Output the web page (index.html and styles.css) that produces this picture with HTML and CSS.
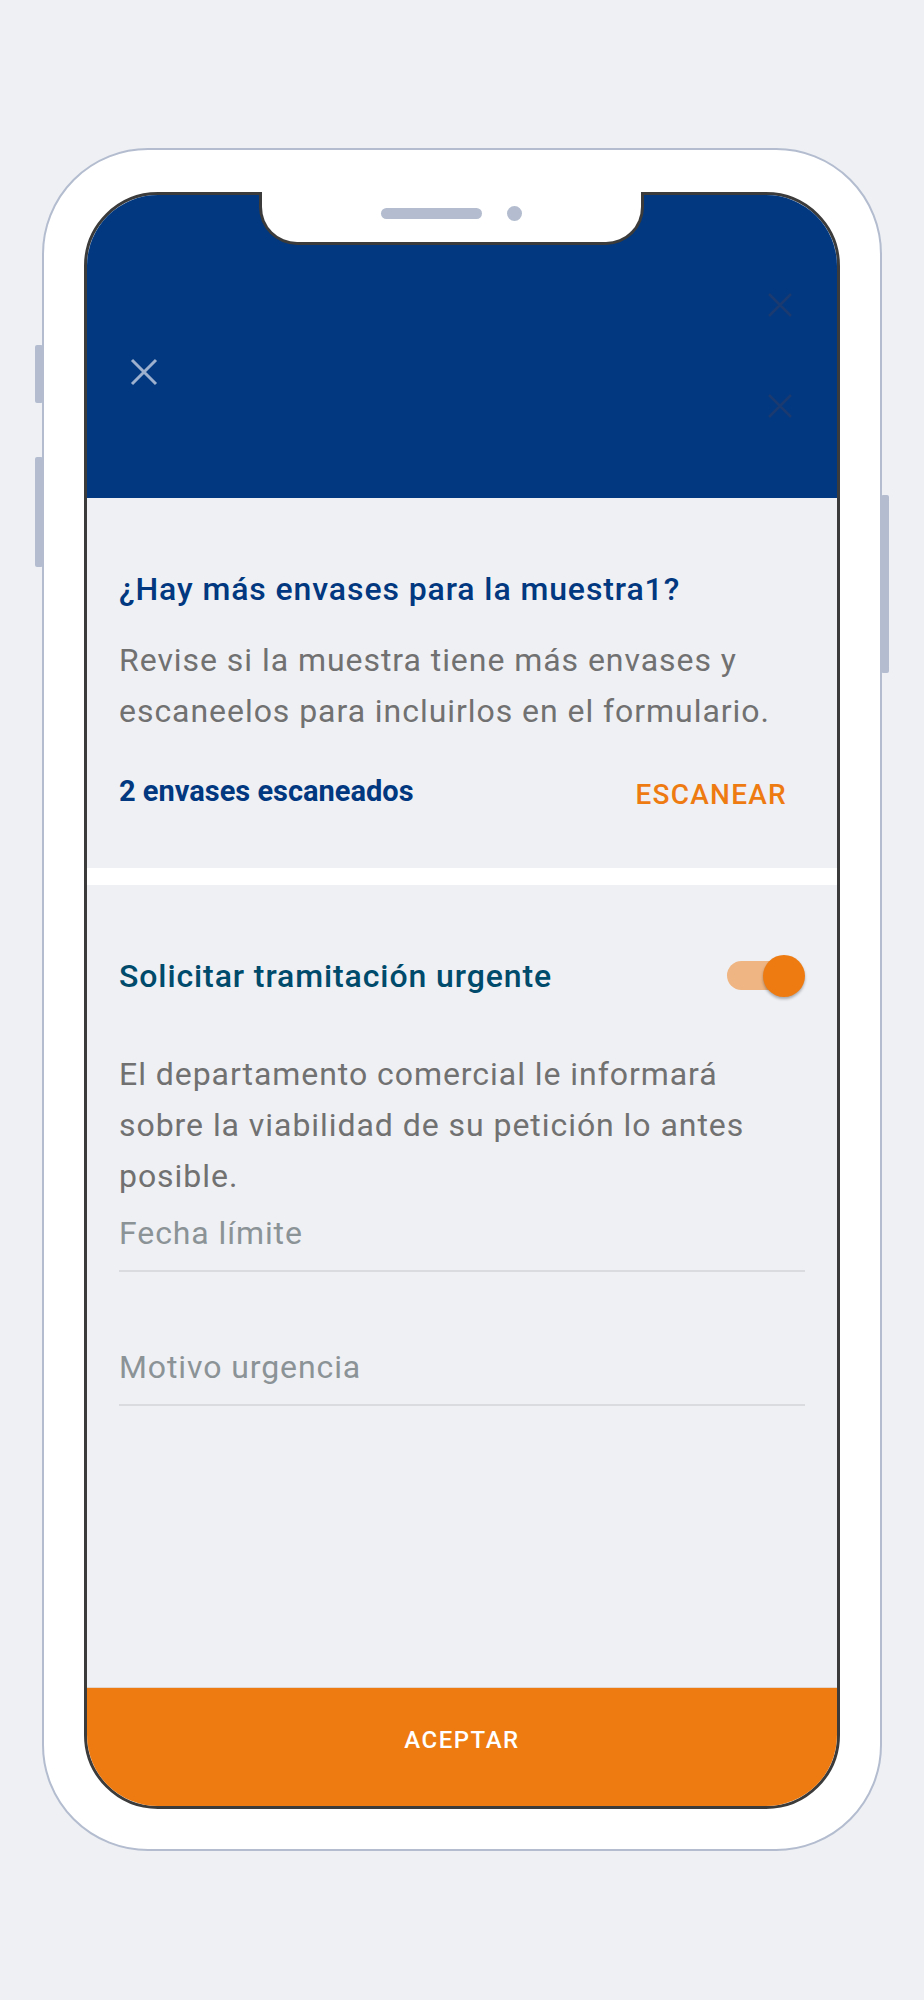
FILE: index.html
```html
<!DOCTYPE html>
<html lang="es">
<head>
    <meta charset="UTF-8">
    <meta name="viewport" content="width=device-width, initial-scale=1.0">
    <title>Muestra - envases</title>
    <link rel="stylesheet" href="styles.css">
</head>
<body>
    <div class="phone">
        <span class="side-btn side-btn-1"></span>
        <span class="side-btn side-btn-2"></span>
        <span class="side-btn side-btn-r"></span>

        <div class="notch">
            <span class="speaker"></span>
            <span class="camera"></span>
        </div>

        <div class="screen">
            <header class="top-bar">
                <button class="close-btn" type="button" aria-label="Cerrar">
                    <svg width="28" height="28" viewBox="0 0 28 28">
                        <path d="M2 2 L26 26 M26 2 L2 26" stroke="#9db1cf" stroke-width="3" fill="none"/>
                    </svg>
                </button>
                <div class="ghost-icons">
                    <svg width="26" height="26" viewBox="0 0 26 26">
                        <path d="M2 2 L24 24 M24 2 L2 24" stroke="#1a3a70" stroke-width="2.5" fill="none"/>
                    </svg>
                    <svg width="26" height="26" viewBox="0 0 26 26">
                        <path d="M2 2 L24 24 M24 2 L2 24" stroke="#1a3a70" stroke-width="2.5" fill="none"/>
                    </svg>
                </div>
            </header>

            <section class="block block-envases">
                <h2 class="block-title">¿Hay más envases para la muestra1?</h2>
                <p class="block-text">Revise si la muestra tiene más envases y escaneelos para incluirlos en el formulario.</p>
                <div class="scan-row">
                    <span class="scan-count">2 envases escaneados</span>
                    <button class="scan-btn" type="button">ESCANEAR</button>
                </div>
            </section>

            <div class="divider"></div>

            <section class="block block-urgente">
                <div class="urgent-row">
                    <h2 class="urgent-title">Solicitar tramitación urgente</h2>
                    <label class="toggle">
                        <input type="checkbox" checked>
                        <span class="track"></span>
                        <span class="knob"></span>
                    </label>
                </div>
                <p class="block-text urgent-text">El departamento comercial le informará sobre la viabilidad de su petición lo antes posible.</p>
                <input class="field field-first" type="text" placeholder="Fecha límite">
                <input class="field" type="text" placeholder="Motivo urgencia">
            </section>

            <div class="spacer"></div>

            <button class="accept-btn" type="button">ACEPTAR</button>
        </div>
    </div>
</body>
</html>
```

FILE: styles.css
```css
body {
    margin: 0;
    background-color: #eef0f4;
    font-family: Roboto, "Liberation Sans", sans-serif;
}
.phone {
    position: relative;
    box-sizing: border-box;
    width: 840px;
    height: 1703px;
    margin: 148px 0 0 42px;
    padding: 42px 40px 0 40px;
    background-color: #fff;
    border: 2px solid #b3bdcf;
    border-radius: 106px;
}
.side-btn {
    position: absolute;
    width: 8px;
    background-color: #b3bdcf;
    border-radius: 2px;
}
.side-btn-1 {
    left: -9px;
    top: 195px;
    height: 58px;
}
.side-btn-2 {
    left: -9px;
    top: 307px;
    height: 110px;
}
.side-btn-r {
    right: -9px;
    top: 345px;
    height: 178px;
}
.notch {
    position: absolute;
    z-index: 2;
    left: 215px;
    top: 42px;
    box-sizing: border-box;
    width: 385px;
    height: 53px;
    padding-top: 14px;
    display: flex;
    justify-content: center;
    align-items: flex-start;
    gap: 25px;
    background-color: #fff;
    border: 3px solid #3b3b3b;
    border-top: none;
    border-radius: 0 0 38px 38px;
}
.speaker {
    width: 101px;
    height: 11px;
    margin-top: 2px;
    background-color: #b3bdcf;
    border-radius: 6px;
}
.camera {
    width: 15px;
    height: 15px;
    background-color: #b3bdcf;
    border-radius: 50%;
}
.screen {
    box-sizing: border-box;
    width: 756px;
    height: 1617px;
    display: flex;
    flex-direction: column;
    overflow: hidden;
    background-color: #eff0f4;
    border: 3px solid #3b3b3b;
    border-radius: 74px;
}
.top-bar {
    flex: none;
    height: 303px;
    box-sizing: border-box;
    padding: 0 44px 0 43px;
    display: flex;
    justify-content: space-between;
    align-items: flex-start;
    background-color: #01387f;
}
.close-btn {
    margin-top: 163px;
    padding: 0;
    border: none;
    background: none;
    line-height: 0;
}
.ghost-icons {
    display: flex;
    flex-direction: column;
    gap: 75px;
    padding-top: 97px;
}
.block {
    padding: 0 32px;
}
.block-envases {
    padding-top: 71px;
    padding-bottom: 53px;
}
.block-title {
    margin: 0;
    font-size: 32px;
    font-weight: 500;
    line-height: 40px;
    letter-spacing: 0.9px;
    color: #01387f;
}
.block-text {
    margin: 26px 0 0;
    font-size: 32px;
    line-height: 51px;
    letter-spacing: 0.95px;
    color: #717171;
}
.scan-row {
    margin-top: 34px;
    display: flex;
    justify-content: space-between;
    align-items: flex-start;
}
.scan-count {
    font-size: 29px;
    font-weight: 700;
    line-height: 40px;
    color: #01387f;
}
.scan-btn {
    padding: 4px 18px 0 0;
    border: none;
    background: none;
    font-family: inherit;
    font-size: 28px;
    font-weight: 500;
    line-height: 40px;
    letter-spacing: 1.25px;
    color: #ee7b12;
}
.divider {
    flex: none;
    height: 17px;
    background-color: #fff;
}
.block-urgente {
    padding-top: 70px;
}
.urgent-row {
    display: flex;
    justify-content: space-between;
    align-items: center;
}
.urgent-title {
    margin: 0;
    font-size: 32px;
    font-weight: 500;
    line-height: 40px;
    letter-spacing: 0.9px;
    color: #004a6b;
}
.toggle {
    position: relative;
    width: 78px;
    height: 42px;
}
.toggle input {
    display: none;
}
.track {
    position: absolute;
    left: 0;
    top: 6px;
    width: 58px;
    height: 29px;
    background-color: #efb582;
    border-radius: 15px;
}
.knob {
    position: absolute;
    right: 0;
    top: 0;
    width: 42px;
    height: 42px;
    background-color: #ee7b12;
    border-radius: 50%;
    box-shadow: 0 2px 3px rgba(0, 0, 0, 0.3);
}
.urgent-text {
    margin-top: 52px;
}
.field {
    display: block;
    box-sizing: border-box;
    width: 100%;
    margin: 5px 0 0;
    padding: 0 0 12px;
    border: none;
    border-bottom: 2px solid #d9dbdf;
    background: none;
    font-family: inherit;
    font-size: 32px;
    line-height: 51px;
    height: 65px;
    letter-spacing: 0.9px;
    color: #333;
    outline: none;
}
.field::placeholder {
    color: #8b9397;
}
.field + .field {
    margin-top: 69px;
}
.spacer {
    flex: 1;
}
.accept-btn {
    flex: none;
    height: 119px;
    padding: 0 0 15px;
    border: none;
    border-top: 1px solid #e2d6cc;
    background-color: #ee7b12;
    font-family: inherit;
    font-size: 24px;
    font-weight: 500;
    letter-spacing: 1.5px;
    color: #fff;
}
```
